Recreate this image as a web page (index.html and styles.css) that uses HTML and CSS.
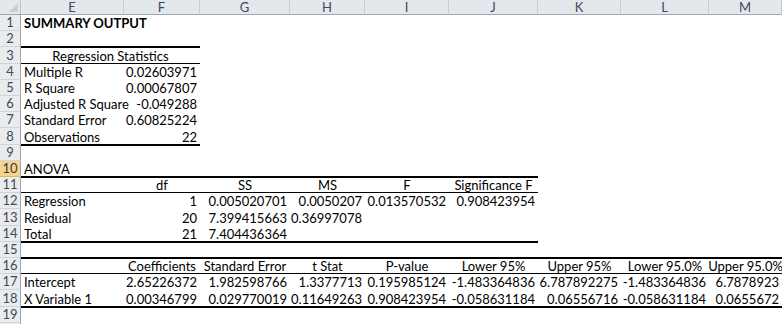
FILE: index.html
```html
<!DOCTYPE html>
<html>
<head>
<meta charset="utf-8">
<title>Summary Output</title>
<link rel="stylesheet" href="styles.css">
</head>
<body>
<div class="sheet">
  <div class="row head">
    <div class="corner"><span class="tri"></span></div>
    <div class="hd">E</div><div class="hd">F</div><div class="hd">G</div><div class="hd">H</div><div class="hd">I</div><div class="hd">J</div><div class="hd">K</div><div class="hd">L</div><div class="hd">M</div>
  </div>
  <div class="row"><div class="rh">1</div><div class="c bold">SUMMARY OUTPUT</div></div>
  <div class="row"><div class="rh">2</div><div class="c tb"></div><div class="c tb"></div></div>
  <div class="row tall"><div class="rh">3</div><div class="c ctr b span2">Regression Statistics</div></div>
  <div class="row"><div class="rh">4</div><div class="c">Multiple R</div><div class="c n">0.02603971</div></div>
  <div class="row"><div class="rh">5</div><div class="c">R Square</div><div class="c n">0.00067807</div></div>
  <div class="row"><div class="rh">6</div><div class="c">Adjusted R Square</div><div class="c n">-0.049288</div></div>
  <div class="row"><div class="rh">7</div><div class="c">Standard Error</div><div class="c n">0.60825224</div></div>
  <div class="row tall"><div class="rh">8</div><div class="c tb">Observations</div><div class="c n tb">22</div></div>
  <div class="row"><div class="rh">9</div></div>
  <div class="row"><div class="rh sel">10</div><div class="c tb to-j">ANOVA</div></div>
  <div class="row"><div class="rh">11</div><div class="c b"></div><div class="c ctr b">df</div><div class="c ctr b">SS</div><div class="c ctr b">MS</div><div class="c ctr b">F</div><div class="c ctr b">Significance F</div></div>
  <div class="row"><div class="rh">12</div><div class="c">Regression</div><div class="c n">1</div><div class="c n">0.005020701</div><div class="c n">0.0050207</div><div class="c n">0.013570532</div><div class="c n">0.908423954</div></div>
  <div class="row tall"><div class="rh">13</div><div class="c">Residual</div><div class="c n">20</div><div class="c n">7.399415663</div><div class="c n">0.36997078</div></div>
  <div class="row"><div class="rh">14</div><div class="c tb">Total</div><div class="c n tb">21</div><div class="c n tb">7.404436364</div><div class="c tb"></div><div class="c tb"></div><div class="c tb"></div></div>
  <div class="row"><div class="rh">15</div><div class="c tb to-m"></div></div>
  <div class="row"><div class="rh">16</div><div class="c b"></div><div class="c ctr b">Coefficients</div><div class="c ctr b">Standard Error</div><div class="c ctr b">t Stat</div><div class="c ctr b">P-value</div><div class="c ctr b">Lower 95%</div><div class="c ctr b">Upper 95%</div><div class="c ctr b">Lower 95.0%</div><div class="c ctr b">Upper 95.0%</div></div>
  <div class="row"><div class="rh">17</div><div class="c">Intercept</div><div class="c n">2.65226372</div><div class="c n">1.982598766</div><div class="c n">1.3377713</div><div class="c n">0.195985124</div><div class="c n">-1.483364836</div><div class="c n">6.787892275</div><div class="c n">-1.483364836</div><div class="c n">6.7878923</div></div>
  <div class="row tall"><div class="rh">18</div><div class="c tb">X Variable 1</div><div class="c n tb">0.00346799</div><div class="c n tb">0.029770019</div><div class="c n tb">0.11649263</div><div class="c n tb">0.908423954</div><div class="c n tb">-0.058631184</div><div class="c n tb">0.06556716</div><div class="c n tb">-0.058631184</div><div class="c n tb">0.0655672</div></div>
  <div class="row"><div class="rh">19</div></div>
  <div class="row"><div class="rh"></div></div>
</div>
</body>
</html>
```

FILE: styles.css
```css
html, body {
  margin: 0;
  padding: 0;
  background: #ffffff;
}

body {
  width: 782px;
  height: 324px;
  overflow: hidden;
  font-family: Lato, "Liberation Sans", sans-serif;
  font-size: 13px;
  color: #000000;
}

.sheet {
  display: flex;
  flex-direction: column;
}

.row {
  display: grid;
  grid-template-columns: 21px 103px 76px 90px 75px 84px 89px 83px 88px 73px;
  height: 16px;
  flex: none;
}

.row.tall {
  height: 17px;
}

.row.head {
  height: 15px;
}

.corner {
  position: relative;
  background: #e4e7eb;
  border-right: 1px solid #b9c0c9;
  border-bottom: 1px solid #9ea7b2;
  box-sizing: border-box;
}

.tri {
  position: absolute;
  right: 2px;
  bottom: 2px;
  width: 0;
  height: 0;
  border-left: 9px solid transparent;
  border-bottom: 9px solid #c9ced5;
}

.hd {
  background: #e4e7eb;
  border-right: 1px solid #c6cbd2;
  border-bottom: 1px solid #9ea7b2;
  box-sizing: border-box;
  color: #3f4a57;
  display: flex;
  align-items: center;
  justify-content: center;
  line-height: 14px;
}

.rh {
  grid-column: 1;
  background: #e9ebee;
  border-right: 1px solid #9ea7b2;
  border-bottom: 1px solid #d0d4da;
  box-sizing: border-box;
  color: #3f4a57;
  display: flex;
  align-items: center;
  justify-content: center;
  line-height: 15px;
}

.rh.sel {
  background: #f5d58e;
  border-bottom-color: #e6b84f;
  color: #3a3a3a;
}

.c {
  display: flex;
  align-items: flex-end;
  padding: 0 3px;
  line-height: 16px;
  white-space: nowrap;
  min-width: 0;
}

.bold {
  font-weight: bold;
}

.n {
  justify-content: flex-end;
}

.ctr {
  justify-content: center;
  padding: 0;
}

.span2 {
  grid-column: 2 / 4;
}

.to-j {
  grid-column: 2 / 8;
}

.to-m {
  grid-column: 2 / 11;
}

.tb {
  box-shadow: inset 0 -1px 0 #000000, 0 1px 0 #000000;
}

.b {
  box-shadow: inset 0 -1px 0 #000000;
}
```
